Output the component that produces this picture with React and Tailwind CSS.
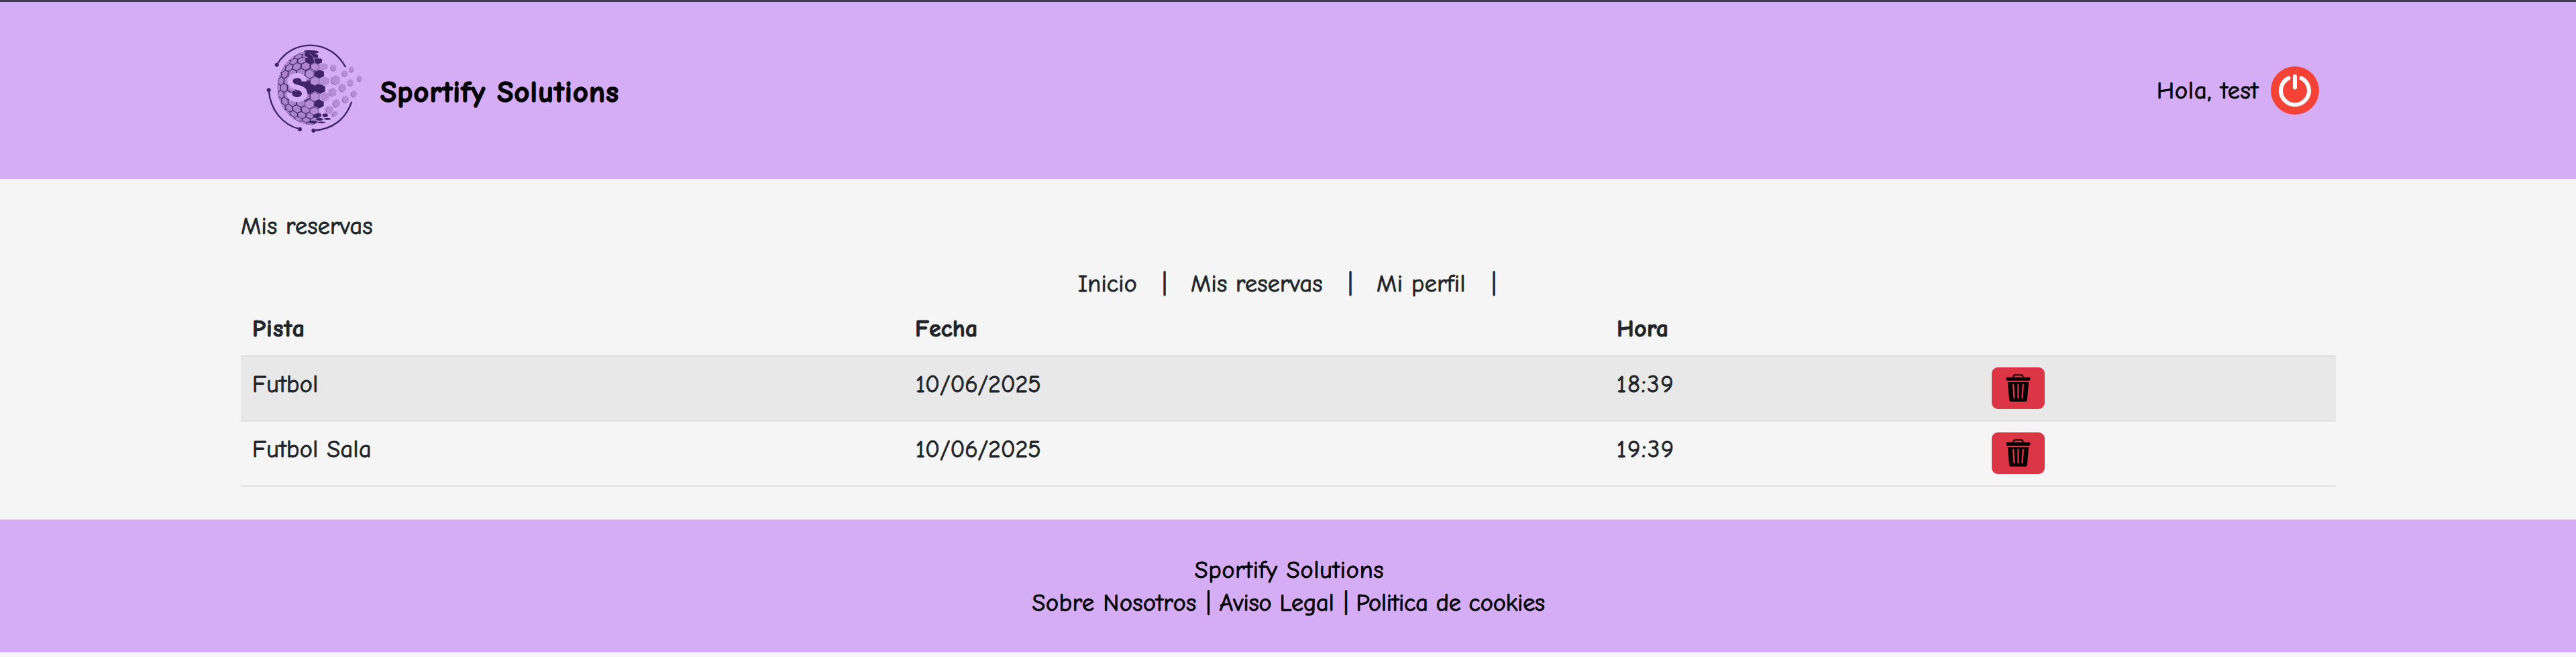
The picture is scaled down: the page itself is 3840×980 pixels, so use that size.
const hexPath = (x, y, rx, ry) =>
  `M${x} ${y - ry}L${x + rx} ${y - ry / 2}V${y + ry / 2}L${x} ${y + ry}L${x - rx} ${y + ry / 2}V${y - ry / 2}Z`;

// Wraps a flat honeycomb point onto the front of the globe.
const project = (u, v) => {
  const r = Math.min(Math.hypot(u, v), 1.57);
  const k = r === 0 ? 1 : Math.sin(r) / Math.hypot(u, v);
  return `${(218 + 165 * u * k).toFixed(1)} ${(243 + 168 * v * k).toFixed(1)}`;
};

const globeCells = [];
for (let row = -7; row <= 7; row++) {
  const v = row * 0.208;
  for (let col = -6; col <= 1; col++) {
    const u = col * 0.268 + (row % 2 !== 0 ? 0.132 : 0);
    if (Math.hypot(u, v) > 1.6 || u > 0.2) continue;
    if (row === 0 && u > -0.3) continue;
    if (row <= -4 && u > -0.1) continue;
    const w = 0.115;
    const h = 0.124;
    const points = [[0, -h], [w, -h / 2], [w, h / 2], [0, h], [-w, h / 2], [-w, -h / 2]];
    globeCells.push(points.map(([a, b]) => project(u + a, v + b)).join(' '));
  }
}

const lightCells = [
  [238, 213, 20, 21], [238, 283, 20, 21], [282, 213, 20, 21], [282, 283, 20, 21], [277, 149, 19, 17],
  [238, 149, 18, 17], [215, 181, 19, 20], [214, 316, 20, 20], [235, 347, 19, 17],
];
const darkCells = [
  [259, 181, 20, 20], [262, 248, 22, 22], [257, 315, 21, 20], [219, 122, 16, 15], [253, 122, 17, 15],
  [236, 101, 16, 12], [212, 94, 18, 14], [238, 83, 16, 7], [208, 80, 18, 6], [248, 366, 18, 13],
  [284, 366, 12, 9], [259, 384, 15, 7], [294, 382, 14, 5], [230, 396, 20, 7], [268, 398, 16, 4],
];
const flying = [
  [321, 153, 12, 15, -15], [372, 178, 12, 15, -8], [402, 161, 10, 13, -12], [331, 208, 19, 22, 0],
  [399, 220, 12, 16, 0], [438, 201, 10, 14, -10], [362, 243, 15, 19, 0], [318, 262, 16, 20, 5],
  [413, 270, 12, 15, 8], [376, 295, 13, 17, 12], [335, 312, 15, 19, 12], [304, 342, 15, 18, 35], [328, 361, 9, 15, 42],
];

function Logo() {
  return (
    <svg viewBox="0 0 480 480" className="mb-[10px] size-40 shrink-0">
      <defs>
        <clipPath id="globe"><path d="M235 76Q232 150 258 240Q262 330 238 406A168 168 0 0 1 218 409A165 168 0 0 1 218 75Z" /></clipPath>
      </defs>
      <g clipPath="url(#globe)">
        <circle cx="218" cy="241" r="170" fill="#3f2466" />
        {globeCells.map((d) => <polygon key={d} points={d} fill="#ab84ca" />)}
      </g>
      {darkCells.map(([x, y, rx, ry]) => <path key={`${x}-${y}`} d={hexPath(x, y, rx, ry)} fill="#3f2466" />)}
      {lightCells.map(([x, y, rx, ry]) => <path key={`${x}-${y}`} d={hexPath(x, y, rx, ry)} fill="#b58dd3" stroke={x < 260 ? '#3f2466' : 'none'} strokeWidth="2" />)}
      <path d="M214 88L232 108L238 134M232 108L262 112" fill="none" stroke="#d5adf5" strokeWidth="2" />
      {flying.map(([x, y, rx, ry, a]) => (
        <g key={`${x}-${y}`} transform={`rotate(${a} ${x} ${y})`}>
          <path d={hexPath(x - 2, y + 2, rx, ry)} fill="#7d5a9d" />
          <path d={hexPath(x, y, rx, ry)} fill="#b58dd3" />
        </g>
      ))}
      <path d="M135 205L180 195L198 205L218 215V275L205 268L150 250Z" fill="#3f2466" />
      <path d="M125 262L165 258L195 270L180 292H135Z" fill="#3f2466" />
      <text x="158" y="302" textAnchor="middle" fontFamily="Inter, sans-serif" fontWeight="700" fontSize="170" textLength="106" lengthAdjust="spacingAndGlyphs" fill="#d5adf5" stroke="none">S</text>
      <g fill="none" stroke="#3f2466" strokeWidth="7" strokeLinecap="round">
        <path d="M68 140C100 85 155 53 218 53C285 53 340 88 374 148" />
        <path d="M32 253C38 340 92 408 171 428" />
        <path d="M232 434C315 430 375 385 402 308" />
      </g>
      <g fill="#3f2466">
        <circle cx="68" cy="140" r="9" /><circle cx="32" cy="253" r="9" /><circle cx="171" cy="428" r="9" /><circle cx="232" cy="434" r="9" />
      </g>
    </svg>
  );
}

function PowerIcon() {
  return (
    <svg viewBox="0 0 72 72" className="size-[72px] shrink-0">
      <circle cx="36" cy="36" r="36" fill="#f44336" />
      <path d="M26.5 17.5A21 21 0 1 0 45.5 17.5M36 15V31.5" fill="none" stroke="#fff" strokeWidth="6" strokeLinecap="round" />
    </svg>
  );
}

function TrashIcon() {
  return (
    <svg viewBox="0 0 110 126" className="h-[42px] w-[37px]">
      <path d="M34 18V12Q34 4 42 4H68Q76 4 76 12V18" fill="none" stroke="#000" strokeWidth="6" />
      <rect x="1" y="14" width="108" height="15" rx="6" fill="#000" />
      <path d="M8 36H102L95 116Q94 123 86 123H24Q16 123 15 116Z" fill="#000" />
      <path d="M33 48L37 106M55 48V106M77 48L73 106" stroke="#dc3545" strokeWidth="7" strokeLinecap="round" />
    </svg>
  );
}

const rows = [
  { court: 'Futbol', date: '10/06/2025', time: '18:39' },
  { court: 'Futbol Sala', date: '10/06/2025', time: '19:39' },
];

export default function App() {
  return (
    <div className="min-h-[980px] bg-[#f5f5f5] font-['Comic_Sans_MS','Comic_Neue',sans-serif] text-[36px] leading-[48px] text-[#212529] [-webkit-text-stroke:1px_currentColor] [font-variant-ligatures:none]">
      <div className="h-[3px] bg-[#423d54]" />
      <header className="flex h-[264px] items-center justify-between bg-[#d5adf5] pl-[390px] pr-[383px] text-black">
        <div className="flex items-center">
          <Logo />
          <h1 className="ml-[17px] mt-[6px] whitespace-nowrap text-[44px] font-bold tracking-[1.3px] [-webkit-text-stroke:1.6px_currentColor]">Sportify Solutions</h1>
        </div>
        <div className="flex items-center">
          <span className="mr-[18px] mt-[2px] whitespace-nowrap tracking-[1px]">Hola, test</span>
          <PowerIcon />
        </div>
      </header>
      <main className="h-[508px] px-[359px] pt-[47px]">
        <p className="tracking-[0.4px]">Mis reservas</p>
        <nav className="mt-[38px] flex justify-center pl-[4px]">
          <a className="w-[119px] tracking-[0.2px]">Inicio</a>
          <span className="w-5 text-center">|</span>
          <a className="ml-[29px] w-[228px] tracking-[0.4px]">Mis reservas</a>
          <span className="w-5 text-center">|</span>
          <a className="ml-[29px] w-[165px] tracking-[0.55px]">Mi perfil</a>
          <span className="w-5 text-center">|</span>
        </nav>
        <div className="mt-[4px] w-[3123px]">
          <div className="grid h-[80px] grid-cols-[988px_1046px_558px_1fr] items-start border-b-2 border-[#e0e0e0] pl-[17px] pt-[15px] font-bold">
            <span className="tracking-[1.2px]">Pista</span>
            <span className="tracking-[0.1px]">Fecha</span>
            <span className="tracking-[0.3px]">Hora</span>
          </div>
          {rows.map((r) => (
            <div key={r.court} className="grid h-[97px] grid-cols-[989px_1045px_559px_1fr] items-start border-b-2 border-[#e0e0e0] pl-[17px] pt-[16px] odd:bg-[#f5f5f5] even:bg-[#e8e8e8]">
              <span className="mt-[2px] tracking-[0.5px]">{r.court}</span>
              <span className="mt-[2px] tracking-[-0.15px]">{r.date}</span>
              <span className="mt-[2px] tracking-[2px]">{r.time}</span>
              <button className="flex h-[62px] w-[79px] items-center justify-center rounded-[9px] bg-[#dc3545]"><TrashIcon /></button>
            </div>
          ))}
        </div>
      </main>
      <footer className="h-[198px] bg-[#d5adf5] pt-[52px] text-black">
        <p className="pl-[4px] text-center tracking-[0.9px]">Sportify Solutions</p>
        <div className="mt-px flex justify-center whitespace-nowrap pl-[2px]">
          <a className="w-[253px] tracking-[0.7px]">Sobre Nosotros</a>
          <span className="w-5 text-center">|</span>
          <a className="ml-1.5 w-[179px]">Aviso Legal</a>
          <span className="w-5 text-center">|</span>
          <a className="ml-[5px] w-[282px] tracking-[-0.1px]">Politica de cookies</a>
        </div>
      </footer>
    </div>
  );
}
